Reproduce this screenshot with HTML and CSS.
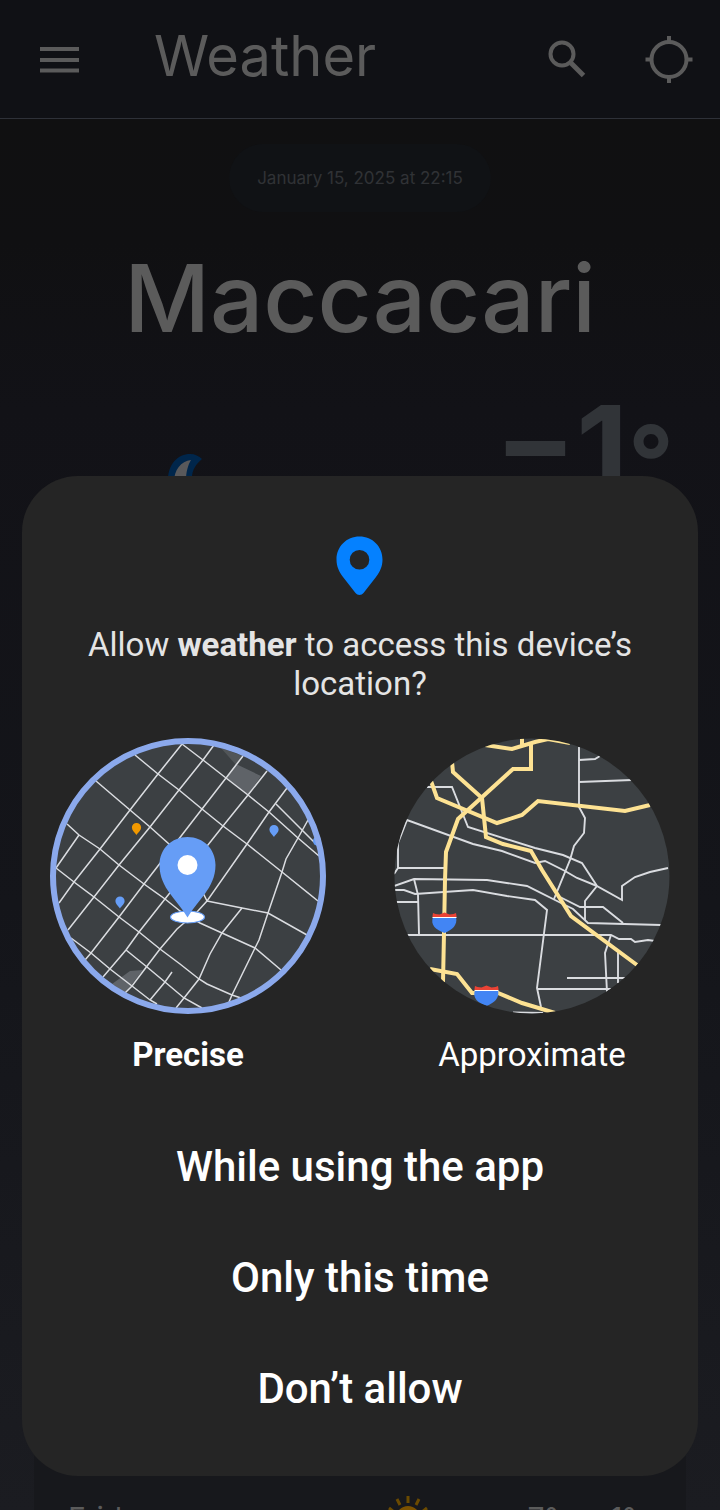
FILE: index.html
```html
<!DOCTYPE html>
<html lang="en">
<head>
<meta charset="utf-8">
<meta name="viewport" content="width=device-width, initial-scale=1">
<title>Weather</title>
<link rel="stylesheet" href="styles.css">
</head>
<body>
<div class="app">
  <header class="bar">
    <button class="icon-button" type="button" aria-label="Menu">
      <svg width="40" height="28" viewBox="0 0 40 28" fill="currentColor"><path d="M0 1h39v4H0zM0 12h39v4H0zM0 22.500h39v4H0z"/></svg>
    </button>
    <h1 class="bar-title">Weather</h1>
    <button class="icon-button search" type="button" aria-label="Search">
      <svg width="40" height="40" viewBox="0 0 40 40" fill="none" stroke="currentColor" stroke-width="4"><circle cx="15" cy="14" r="11.5"/><path d="M24 23 36.500 35.500" stroke-width="5"/></svg>
    </button>
    <button class="icon-button" type="button" aria-label="My location">
      <svg width="48" height="48" viewBox="0 0 48 48" fill="none" stroke="currentColor" stroke-width="4"><circle cx="24" cy="23.500" r="17.500"/><path d="M24 0v6M24 41v6M.5 23.500h6M41.500 23.500h6"/></svg>
    </button>
  </header>
  <main class="content">
    <p class="stamp">January 15, 2025 at 22:15</p>
    <h2 class="city">Maccacari</h2>
    <div class="now">
      <svg class="moon" width="62" height="62" viewBox="0 0 62 62"><path fill="#00264b" d="M36 5C30 10 26 16 26 24c0 14 14 20 32 18-4 10-14 18-26 18C14 60 2 46 2 26 2 10 12 0 24 0c5 0 9 2 12 5z"/><path fill="#59595b" d="M25 6C15 7 8 16 8 28c0 16 12 26 26 26-10-5-14-16-14-28 0-8 2-15 5-20z"/></svg>
      <p class="temp">−1<span class="degree">°</span></p>
    </div>
    <section class="forecast">
      <div class="day">
        <span class="day-name">Friday</span>
        <svg width="42" height="44" viewBox="0 0 42 44"><circle cx="21" cy="22" r="12" fill="#7b5100"/><path d="M21 0v7M21 37v7M0 22h5M37 22h5M2 12l5 4M35 28l5 4M2 32l5-4M35 16l5-4M10 3l3 6M32 3l-3 6M10 41l3-6M32 41l-3-6" stroke="#6b4a00" stroke-width="3"/></svg>
        <span class="range"><span>7°</span><span>1°</span></span>
      </div>
    </section>
  </main>
</div>

<div class="scrim">
  <form class="dialog" role="dialog" aria-labelledby="question">
    <svg class="place" width="48" height="59" viewBox="0 0 48 59"><path fill="#0581ff" fill-rule="evenodd" d="M23.500.5C10.500.5.500 10.500.500 23.500c0 7 2.500 12 6.500 17.500l12.500 16c2 2.500 6 2.500 8 0l12.500-16c4-5.500 6.500-10.500 6.500-17.500C46.500 10.500 36.500.5 23.500.5zm0 13.500a9.800 9.800 0 1 1 0 19.600 9.800 9.800 0 0 1 0-19.600z"/></svg>
    <p class="question" id="question">Allow <strong>weather</strong> to access this device’s location?</p>

    <div class="choices">
      <label class="choice">
        <input class="choice-input" type="radio" name="accuracy" value="precise" checked>
        <svg class="map" viewBox="0 0 276 276">
          <defs><clipPath id="disc"><circle cx="138" cy="138" r="137.500"/></clipPath></defs>
          <g clip-path="url(#disc)">
            <rect width="276" height="276" fill="#3c4043"/>
            <path d="M171 10l22 8-7 9z" fill="#515558"/>
            <path d="M186 26l25 12-13 19-22-17zM62 246l18-13 13-1-18 23z" fill="#5f6368"/>
            <g fill="none" stroke="#dadce0" stroke-width="1.500">
              <path d="M132 6 153 22 176 40 198 57 219 74 248 100 269 118M226 66 252 92 264 104"/>
              <path d="M85 17 108 36 129 52 152 71 173 88 197 106 232 134 268 163"/>
              <path d="M46 43 80 72 100 89 119 106 154 157 157 163"/>
              <path d="M17 86 29 97 50 111 69 127 94 146 115 161 130 173 150 185 172 195 205 210 231 232"/>
              <path d="M6 130 24 144 44 159 69 179 89 194 110 211 130 226 149 241 157 246 182 257 191 260"/>
              <path d="M21 200 41 215 60 231 82 248 100 262 107 266M76 212 97 229 115 244 134 260 152 270"/>
              <path d="M6 130 29 97M132 6 108 36 80 72 50 111 24 144 9 165"/>
              <path d="M164 7 153 22 129 52 100 89 69 127 44 159 18 192"/>
              <path d="M193 18 176 40 152 71 94 146 69 179 41 215 35 222"/>
              <path d="M217 33 198 57 173 88 115 161 89 194 76 212 53 239"/>
              <path d="M237 50 219 74 197 106 157 163 147 174 127 191 110 211 82 248 75 255"/>
              <path d="M122 234 115 244 100 262M126 270 134 260 149 241 160 216 172 195 192 170"/>
              <path d="M157 163 192 170 218 175 257 197M258 82 248 100 236 121 232 134 218 175 209 202 205 210 182 257 179 264"/>
            </g>
            <path d="M86.500 85a4.600 4.600 0 0 1 4.600 4.600c0 3-2.500 4.400-4.600 7.400-2.100-3-4.600-4.400-4.600-7.400a4.600 4.600 0 0 1 4.600-4.600z" fill="#f29900"/>
            <g fill="#669df6">
              <path d="M224 87a4.600 4.600 0 0 1 4.600 4.600c0 3-2.500 4.400-4.600 7.400-2.100-3-4.600-4.400-4.600-7.400a4.600 4.600 0 0 1 4.600-4.600zM70 158.500a4.600 4.600 0 0 1 4.600 4.600c0 3-2.500 4.400-4.600 7.400-2.100-3-4.600-4.400-4.600-7.400a4.600 4.600 0 0 1 4.600-4.600z"/>
              <circle cx="268" cy="103" r="5"/>
            </g>
            <ellipse cx="137.500" cy="179" rx="17" ry="6" fill="#fff" stroke="#669df6" stroke-width="1.200"/>
            <path d="M137.500 99c16 0 28 12 28 28 0 23-18 35-28 52.500-10-17.500-28-29.500-28-52.500 0-16 12-28 28-28z" fill="#669df6"/>
            <circle cx="137.500" cy="127" r="10" fill="#fff"/>
          </g>
          <circle class="ring" cx="138" cy="138" r="135"/>
        </svg>
        <span class="choice-name">Precise</span>
      </label>

      <label class="choice">
        <input class="choice-input" type="radio" name="accuracy" value="approximate">
        <svg class="map" viewBox="0 0 276 276">
          <g clip-path="url(#disc)">
            <rect width="276" height="276" fill="#3c4043"/>
            <g fill="none" stroke="#dadce0" stroke-width="1.900">
              <path d="M33 49H58L74 89 141 110 169 117 188 125 203 148 228 162V148L241 139 256 134 274 130"/>
              <path d="M0 136 4 130V105L13 82 79 106 108 113 141 125 151 123 171 133 183 140 203 148M4 130H51"/>
              <path d="M185 9V69L191 80 190 95 180 108 176 122 160 161M185 22 201 21 206 18M185 44 238 42"/>
              <path d="M0 148 20 141 93 142 133 148 161 162 179 171 194 185 267 187"/>
              <path d="M1 152H10L21 156 79 152 113 158 141 162 153 172 143 250 147 269"/>
              <path d="M20 141 24 157 25 196M2 164H24M13 197H217L225 201H237L241 204 254 202 261 203"/>
              <path d="M217 197 211 215 213 254M224 214V245M173 240H231M143 251H217"/>
              <path d="M166 159 186 169H209L229 185M203 148 191 163V182M119 274.500 149 275"/>
            </g>
            <g fill="none" stroke="#fde293" stroke-width="4">
              <path d="M91 7 118 11 141 4 154 1 176 5M128 0V7"/>
              <path d="M137 6V31H119L64 81 52 114 51 142 50 195 49 244"/>
              <path d="M58 24 59 34 88 60 92 99 109 106 137 113 148 132 177 178 243 227"/>
              <path d="M37 43 43 60 103 85 128 77 144 63 231 73 256 67"/>
              <path d="M36 231 63 236 78 255H104L128 265 161 275"/>
            </g>
            <g>
              <path d="M39 179h23c2 8-4 13-11.500 16C42 192 36 187 39 179z" fill="#4285f4"/>
              <path d="M38.500 179v-1l.5-3 2.500 1 4 .5 5-2 5 2 4-.5 2.500-1 .5 3v1z" fill="#ea4335"/><path d="M38.500 179.500h24" stroke="#fff"/>
            </g>
            <g>
              <path d="M81 252h23c2 8-4 13-11.500 16C84 265 78 260 81 252z" fill="#4285f4"/>
              <path d="M80.500 252v-1l.5-3 2.500 1 4 .5 5-2 5 2 4-.5 2.500-1 .5 3v1z" fill="#ea4335"/><path d="M80.500 252.500h24" stroke="#fff"/>
            </g>
          </g>
          <circle class="ring" cx="138" cy="138" r="135"/>
        </svg>
        <span class="choice-name">Approximate</span>
      </label>
    </div>

    <div class="actions">
      <button class="action" type="button">While using the app</button>
      <button class="action" type="button">Only this time</button>
      <button class="action" type="button">Don’t allow</button>
    </div>
  </form>
</div>
</body>
</html>
```
FILE: styles.css
```css
* { box-sizing: border-box; }
body, h1, h2, p { margin: 0; }
body { background: #101012; }
button { padding: 0; border: 0; background: none; color: inherit; font: inherit; }
svg { display: block; }

.app {
  height: 100vh;
  overflow: hidden;
  display: flex;
  flex-direction: column;
  color: #5b5b5b;
  font-family: Inter, "Open Sans", sans-serif;
  background: linear-gradient(#101010, #101012 16%, #121217 27%, #14151a 60%, #1b1c21);
}
.bar {
  flex: none;
  height: 119px;
  padding: 2px 27px 0 40px;
  display: flex;
  align-items: center;
  background: #101115;
  border-bottom: 1px solid #2e3138;
}
.bar-title {
  flex: 1;
  padding: 0 0 8px 74px;
  font-size: 56px;
  font-weight: 400;
  line-height: 80px;
}
.search { margin-right: 58px; }

.content {
  flex: 1;
  padding: 25px 34px 0;
  display: flex;
  flex-direction: column;
  align-items: center;
}
.stamp {
  padding: 24px 28px;
  border-radius: 34px;
  background: #101215;
  color: #303236;
  font-size: 17px;
  line-height: 20px;
}
.city {
  margin-top: 28px;
  font-size: 94px;
  font-weight: 500;
  line-height: 116px;
}
.now {
  width: 100%;
  margin-top: 5px;
  padding: 0 12px 0 132px;
  display: flex;
  align-items: flex-start;
  justify-content: space-between;
  color: #313438;
}
.moon { margin-top: 93px; }
.temp {
  display: flex;
  font-size: 120px;
  font-weight: 700;
  line-height: 176px;
}
.degree {
  margin-top: 12px;
  font-size: 100px;
}
.forecast {
  width: 100%;
  flex: none;
  margin-top: auto;
  height: 150px;
  padding: 136px 50px 0 34px;
  background: #17181c;
}
.day {
  display: flex;
  align-items: flex-start;
  font-size: 30px;
  line-height: 44px;
}
.day-name { flex: 1; }
.range {
  margin-left: 98px;
  display: flex;
  gap: 52px;
}

.scrim {
  position: fixed;
  inset: 0;
  padding: 0 22px 34px;
  display: flex;
  align-items: flex-end;
}
.dialog {
  width: 100%;
  padding: 60px 28px 32px;
  border-radius: 56px;
  background: #252525;
  color: #fff;
  font-family: Roboto, "Liberation Sans", sans-serif;
  font-size: 33px;
  line-height: 39px;
  text-align: center;
}
.place { margin: 0 auto; }
.question {
  margin-top: 30px;
  padding: 0 32px;
  color: #e4e4e4;
}
.choices {
  margin-top: 35px;
  display: flex;
  justify-content: space-between;
}
.choice { position: relative; width: 276px; }
.choice-input { position: absolute; inset: 0; margin: 0; opacity: 0; }
.map { width: 100%; }
.choice-name { display: block; margin-top: 21px; }
.ring { fill: none; stroke: #8ba9ec; stroke-width: 6; visibility: hidden; }
.choice-input:checked ~ .map .ring { visibility: visible; }
.choice-input:checked ~ .choice-name { font-weight: 700; }
.actions {
  margin-top: 37px;
  display: flex;
  flex-direction: column;
}
.action {
  height: 111px;
  font-size: 42px;
  font-weight: 500;
}
```
